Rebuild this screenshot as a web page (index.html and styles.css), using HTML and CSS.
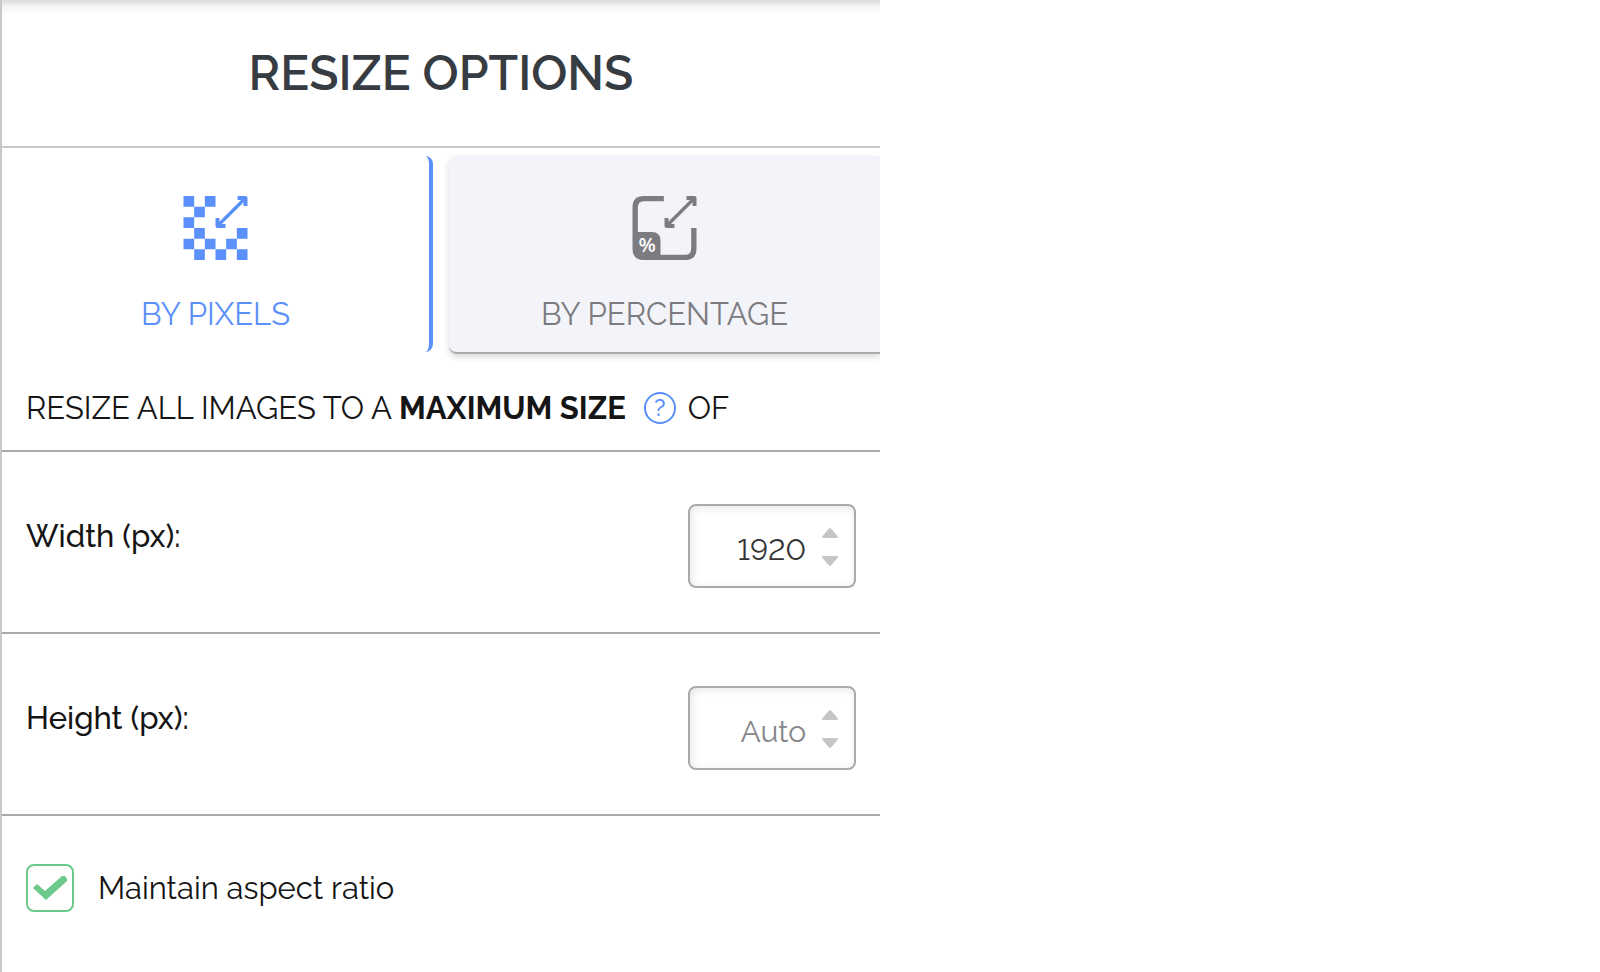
FILE: index.html
```html
<!DOCTYPE html>
<html lang="en">
<head>
<meta charset="utf-8">
<title>Resize options</title>
<link rel="stylesheet" href="styles.css">
</head>
<body>
<main class="panel">
  <header class="panel-header"><h1 class="title">RESIZE OPTIONS</h1></header>
  <div class="tabs" role="tablist">
    <button class="tab tab-active" type="button" role="tab" aria-selected="true">
      <svg class="tab-icon" viewBox="0 0 96 96" aria-hidden="true">
        <path fill="currentColor" d="M0 0h16v16H0zM32 0h16v16H32zM16 16h16v16H16zM0 32h16v16H0zM16 48h16v16H16zM80 48h16v16H80zM0 64h16v16H0zM32 64h16v16H32zM64 64h16v16H64zM16 80h16v16H16zM48 80h16v16H48zM80 80h16v16H80z"/>
        <path fill="none" stroke="currentColor" stroke-width="5" d="M51 45L93 3"/>
        <path fill="none" stroke="currentColor" stroke-width="6" stroke-linejoin="round" d="M81 3H93V15M51 33V45H63"/>
      </svg>
      <span class="tab-label">BY PIXELS</span>
    </button>
    <button class="tab" type="button" role="tab" aria-selected="false">
      <svg class="tab-icon" viewBox="0 0 96 96" aria-hidden="true">
        <path fill="none" stroke="currentColor" stroke-width="8" d="M47 4H17Q4 4 4 17V79Q4 92 17 92H79Q92 92 92 79V48"/>
        <path fill="currentColor" d="M3 54H29Q42 54 42 67V94H17Q3 94 3 80z"/>
        <path fill="none" stroke="currentColor" stroke-width="5" d="M51 45L93 3"/>
        <path fill="none" stroke="currentColor" stroke-width="6" stroke-linejoin="round" d="M81 3H93V15M51 33V45H63"/>
        <text class="percent" x="22" y="84" text-anchor="middle">%</text>
      </svg>
      <span class="tab-label">BY PERCENTAGE</span>
    </button>
  </div>
  <div class="intro">
    <span>RESIZE ALL IMAGES TO A <strong>MAXIMUM SIZE</strong></span>
    <button class="help" type="button" aria-label="Help">?</button>
    <span>OF</span>
  </div>
  <div class="row">
    <label class="row-label" for="width">Width (px):</label>
    <div class="field">
      <input class="number" id="width" type="number" value="1920">
      <div class="spinner">
        <button class="step" type="button" aria-label="Increase width"><svg class="arrow" viewBox="0 0 16 10"><path d="M7 .5Q8-.4 9 .5L15.500 8Q16.500 10 15 10H1Q-.5 10 .5 8z"/></svg></button>
        <button class="step" type="button" aria-label="Decrease width"><svg class="arrow" viewBox="0 0 16 10"><path d="M7 9.500Q8 10.400 9 9.500L15.500 2Q16.500 0 15 0H1Q-.5 0 .5 2z"/></svg></button>
      </div>
    </div>
  </div>
  <div class="row">
    <label class="row-label" for="height">Height (px):</label>
    <div class="field">
      <input class="number" id="height" type="number" placeholder="Auto">
      <div class="spinner">
        <button class="step" type="button" aria-label="Increase height"><svg class="arrow" viewBox="0 0 16 10"><path d="M7 .5Q8-.4 9 .5L15.500 8Q16.500 10 15 10H1Q-.5 10 .5 8z"/></svg></button>
        <button class="step" type="button" aria-label="Decrease height"><svg class="arrow" viewBox="0 0 16 10"><path d="M7 9.500Q8 10.400 9 9.500L15.500 2Q16.500 0 15 0H1Q-.5 0 .5 2z"/></svg></button>
      </div>
    </div>
  </div>
  <div class="check-row">
    <span class="check">
      <input class="checkbox" id="ratio" type="checkbox" checked>
      <svg class="tick" viewBox="0 0 48 48" aria-hidden="true"><path d="M7 24l4-4 8 7 17-15h3l2 3v2L20 36z"/></svg>
    </span>
    <label for="ratio">Maintain aspect ratio</label>
  </div>
</main>
</body>
</html>
```
FILE: styles.css
```css
* { box-sizing: border-box; }
body {
  margin: 0;
  background: #fff;
  color: #151515;
  font: 31px/40px Raleway, Lato, sans-serif;
}
button, input { font: inherit; color: inherit; margin: 0; }
.panel {
  width: 55%;
  min-height: 100vh;
  border-left: 2px solid #c8c8c8;
  overflow: hidden;
}
.panel-header {
  padding: 41px 24px;
  border-bottom: 2px solid #c8c8c8;
  background: linear-gradient(#dadada, #f3f3f3 6px, #fff 14px);
  text-align: center;
}
.title {
  margin: 0;
  color: #373c43;
  font-size: 48px;
  font-weight: 600;
  line-height: 64px;
}
.tabs {
  display: grid;
  grid-template-columns: 1fr 1fr;
  gap: 16px;
  padding-top: 8px;
}
.tab {
  display: flex;
  flex-direction: column;
  align-items: center;
  gap: 34px;
  height: 198px;
  padding: 40px 0 0;
  border: 0;
  border-bottom: 2px solid #a9a9ae;
  border-radius: 8px 0 0 8px;
  background: #f3f4f9;
  box-shadow: 0 3px 6px #00000026;
  color: #7c7b80;
}
.tab-active {
  height: 196px;
  border-bottom: 0;
  border-right: 4px solid #5b8ff9;
  border-radius: 0 8px 8px 0;
  background: none;
  box-shadow: none;
  color: #5b8ff9;
}
.tab-icon { width: 65px; height: 64px; }
.percent { fill: #fff; font: 600 30px "Open Sans", sans-serif; }
.intro {
  display: flex;
  align-items: center;
  padding: 34px 24px 22px;
  border-bottom: 2px solid #a9a9a9;
}
.help {
  width: 32px;
  height: 32px;
  margin: 0 12px 0 18px;
  padding: 0;
  border: 2px solid #5b8ff9;
  border-radius: 50%;
  background: none;
  color: #5b8ff9;
  font-size: 24px;
  font-weight: 500;
  line-height: 28px;
}
.row {
  display: flex;
  justify-content: space-between;
  padding: 52px 24px 44px;
  border-bottom: 2px solid #a9a9ad;
}
.row-label { line-height: 64px; font-weight: 500; }
.field { position: relative; width: 168px; }
.number {
  display: block;
  width: 100%;
  height: 84px;
  padding: 6px 48px 0 12px;
  border: 2px solid #a9a9ae;
  border-radius: 8px;
  background: #fff;
  box-shadow: inset 2px 2px 8px #00000018;
  color: #333;
  font-size: 30px;
  font-variant-numeric: lining-nums;
  text-align: right;
  appearance: textfield;
}
.number::-webkit-inner-spin-button { appearance: none; margin: 0; }
.number::placeholder { color: #858589; }
.spinner {
  position: absolute;
  top: 15px;
  right: 18px;
  display: flex;
  flex-direction: column;
}
.step {
  display: grid;
  place-items: center;
  width: 16px;
  height: 28px;
  padding: 0;
  border: 0;
  background: none;
}
.arrow { width: 16px; height: 10px; fill: #c5c5c5; }
.check-row {
  display: flex;
  align-items: center;
  gap: 24px;
  padding: 48px 24px;
}
.check { position: relative; width: 48px; height: 48px; }
.checkbox {
  display: block;
  width: 48px;
  height: 48px;
  appearance: none;
  border: 2px solid #6cc88b;
  border-radius: 8px;
}
.tick { position: absolute; inset: 0; fill: #6cc88b; pointer-events: none; }
.checkbox:not(:checked) + .tick { display: none; }
```
